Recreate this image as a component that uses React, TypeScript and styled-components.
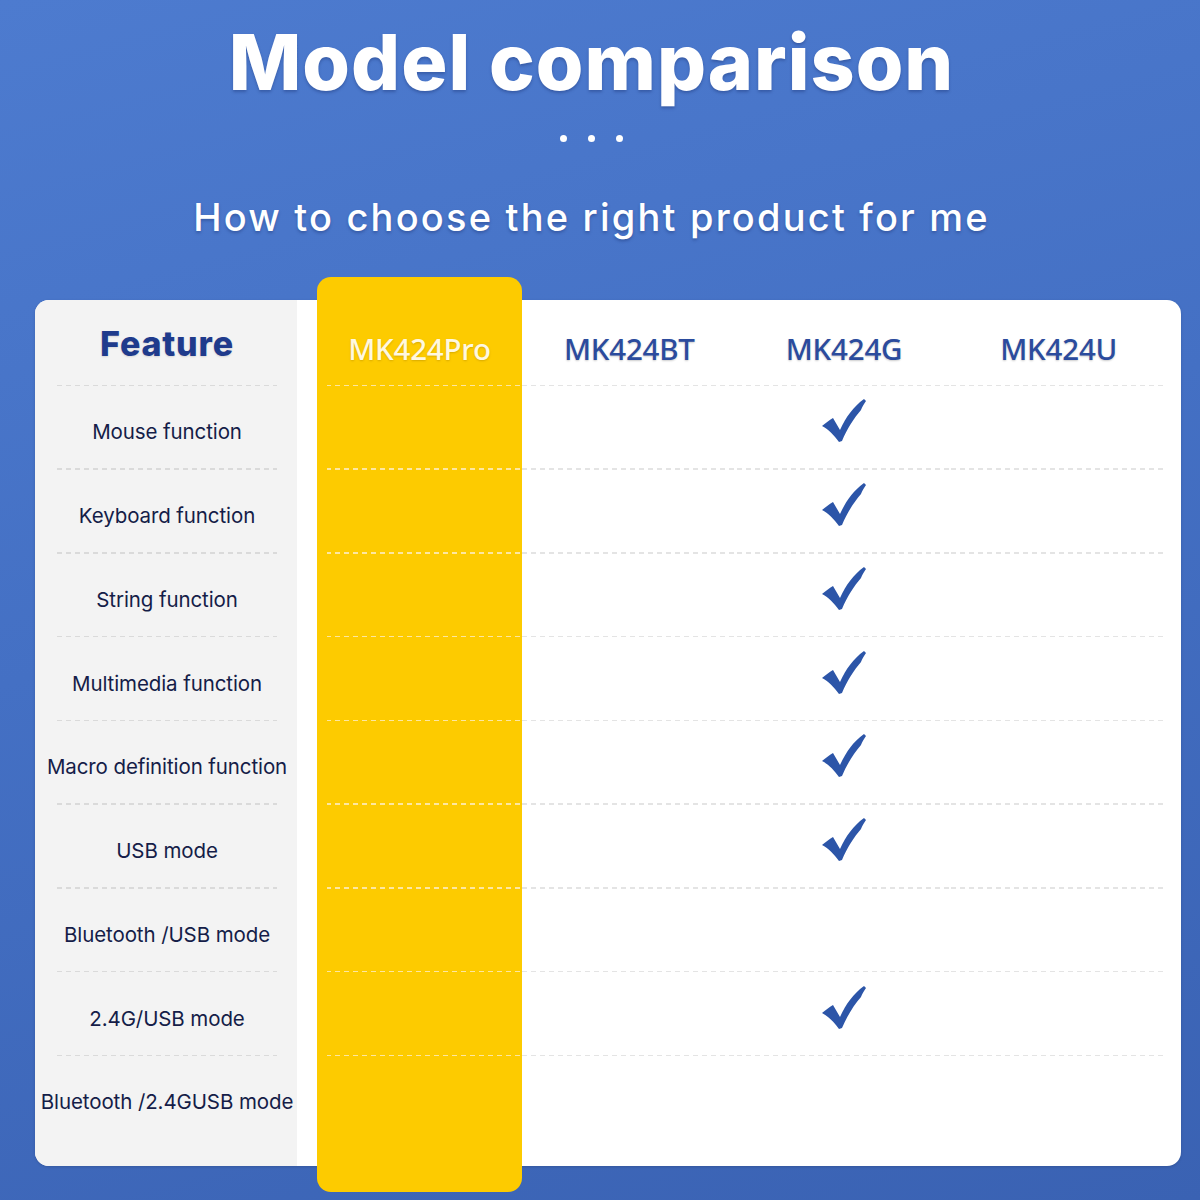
import styled, { createGlobalStyle } from 'styled-components'

const GlobalStyle = createGlobalStyle`
  html, body {
    margin: 0;
    padding: 0;
  }
  body {
    font-family: Inter, "Noto Sans", sans-serif;
  }
`

const Page = styled.div`
  width: 1200px;
  height: 1200px;
  overflow: hidden;
  background: linear-gradient(165deg, #4d7bcf 0%, #4470c4 45%, #3a62b3 100%);
  display: flex;
  flex-direction: column;
`

const Header = styled.header`
  display: flex;
  flex-direction: column;
  align-items: center;
  padding: 16px 17px 37px 0;
  color: #fff;
`

const Title = styled.h1`
  margin: 0;
  font-size: 77px;
  line-height: 92px;
  font-weight: 800;
  letter-spacing: 1px;
  text-shadow: 0 2px 3px rgba(20, 40, 100, 0.35);
`

const Dots = styled.div`
  display: flex;
  gap: 21px;
  margin-top: 27px;
`

const Dot = styled.span`
  width: 7px;
  height: 7px;
  border-radius: 50%;
  background: #fff;
`

const Subtitle = styled.h2`
  margin: 53px 0 0;
  font-size: 38px;
  line-height: 45px;
  font-weight: 500;
  letter-spacing: 2.2px;
  text-shadow: 0 2px 3px rgba(20, 40, 100, 0.35);
`

const Card = styled.div`
  margin: 23px 19px 0 35px;
  height: 866px;
  display: flex;
  background: #fff;
  border-radius: 14px;
  padding-right: 15px;
  box-shadow: 0 1px 3px rgba(0, 0, 0, 0.15);
`

const FeatureColumn = styled.div`
  width: 262px;
  padding: 0 20px 0 22px;
  box-sizing: border-box;
  background: #f3f3f3;
  border-radius: 14px 0 0 14px;
  display: flex;
  flex-direction: column;
`

const ProColumn = styled.div`
  width: 205px;
  margin: -23px 0 -26px 20px;
  box-sizing: border-box;
  background: #fdcb00;
  border-radius: 14px;
  display: flex;
  flex-direction: column;
`

const ModelColumn = styled.div`
  flex: 1;
  display: flex;
  flex-direction: column;
`

/* dashed row divider; $inset hides the first pixels of the dash */
const dash = (color: string, inset: number) => `
  background-image: linear-gradient(#fdcb00, #fdcb00), linear-gradient(to right, ${color} 60%, transparent 0);
  background-position: left bottom, left bottom;
  background-size: ${inset}px 2px, 9px 1.5px;
  background-repeat: no-repeat, repeat-x;
`

const Cell = styled.div<{ $kind: 'head' | 'row' | 'last'; $top?: number; $dash?: string; $inset?: number }>`
  height: ${p => (p.$kind === 'head' ? 86 : p.$kind === 'row' ? 83.75 : 82) + (p.$top || 0)}px;
  padding-top: ${p => p.$top || 0}px;
  box-sizing: border-box;
  flex-shrink: 0;
  display: flex;
  align-items: center;
  justify-content: center;
  text-align: center;
  ${p => (p.$kind !== 'last' && p.$dash ? dash(p.$dash, p.$inset || 0) : '')}
`

const FeatureHead = styled.span`
  font-size: 34px;
  font-weight: 800;
  letter-spacing: 0.8px;
  color: #1f3b8c;
  text-shadow: 0 1px 2px rgba(0, 0, 0, 0.12);
`

const FeatureLabel = styled.span`
  font-size: 20.5px;
  font-weight: 400;
  color: #151d48;
  white-space: nowrap;
  letter-spacing: -0.1px;
  margin-top: 8px;
`

const ModelName = styled.span<{ $light?: boolean }>`
  font-family: "Noto Sans", sans-serif;
  font-size: 29.5px;
  font-weight: 500;
  letter-spacing: -0.2px;
  color: ${p => (p.$light ? '#fff8e0' : '#2b4b9d')};
  text-shadow: ${p => (p.$light ? '0 1px 2px rgba(150, 110, 0, 0.35)' : '0 1px 2px rgba(0, 0, 0, 0.2)')};
  margin-top: 10px;
`

const CheckMark = styled.svg`
  margin-top: -14px;
`

const Filler = styled.div`
  flex: 1;
`

const Check = () => (
  <CheckMark width="45" height="43" viewBox="0 0 45 43">
    <path
      d="M0 27 C4 24 7 21 11 19 L18 31 C24 18 31 8 42 0 L44 2 C42 5 40 8 39 11 C32 19 25 30 20 42 L17 43 C12 36 6 30 0 27 Z"
      fill="#2c55a8"
    />
  </CheckMark>
)

const features = [
  'Mouse function',
  'Keyboard function',
  'String function',
  'Multimedia function',
  'Macro definition function',
  'USB mode',
  'Bluetooth /USB mode',
  '2.4G/USB mode',
  'Bluetooth /2.4GUSB mode',
]

const models: { name: string; checks: boolean[] }[] = [
  { name: 'MK424BT', checks: features.map(() => false) },
  { name: 'MK424G', checks: [true, true, true, true, true, true, false, true, false] },
  { name: 'MK424U', checks: features.map(() => false) },
]

const kindOf = (i: number) => (i === features.length - 1 ? 'last' : 'row')

export default function App() {
  return (
    <Page>
      <GlobalStyle />
      <Header>
        <Title>Model comparison</Title>
        <Dots>
          <Dot />
          <Dot />
          <Dot />
        </Dots>
        <Subtitle>How to choose the right product for me</Subtitle>
      </Header>
      <Card>
        <FeatureColumn>
          <Cell $kind="head" $dash="#dadada">
            <FeatureHead>Feature</FeatureHead>
          </Cell>
          {features.map((f, i) => (
            <Cell key={f} $kind={kindOf(i)} $dash="#dadada">
              <FeatureLabel>{f}</FeatureLabel>
            </Cell>
          ))}
          <Filler />
        </FeatureColumn>
        <ProColumn>
          <Cell $kind="head" $top={23} $dash="#fde7a0" $inset={10}>
            <ModelName $light>MK424Pro</ModelName>
          </Cell>
          {features.map((f, i) => (
            <Cell key={f} $kind={kindOf(i)} $dash="#fde7a0" $inset={10} />
          ))}
          <Filler />
        </ProColumn>
        {models.map(m => (
          <ModelColumn key={m.name}>
            <Cell $kind="head" $dash="#e4e4e4">
              <ModelName>{m.name}</ModelName>
            </Cell>
            {m.checks.map((c, i) => (
              <Cell key={features[i]} $kind={kindOf(i)} $dash="#e4e4e4">
                {c && <Check />}
              </Cell>
            ))}
            <Filler />
          </ModelColumn>
        ))}
      </Card>
    </Page>
  )
}
